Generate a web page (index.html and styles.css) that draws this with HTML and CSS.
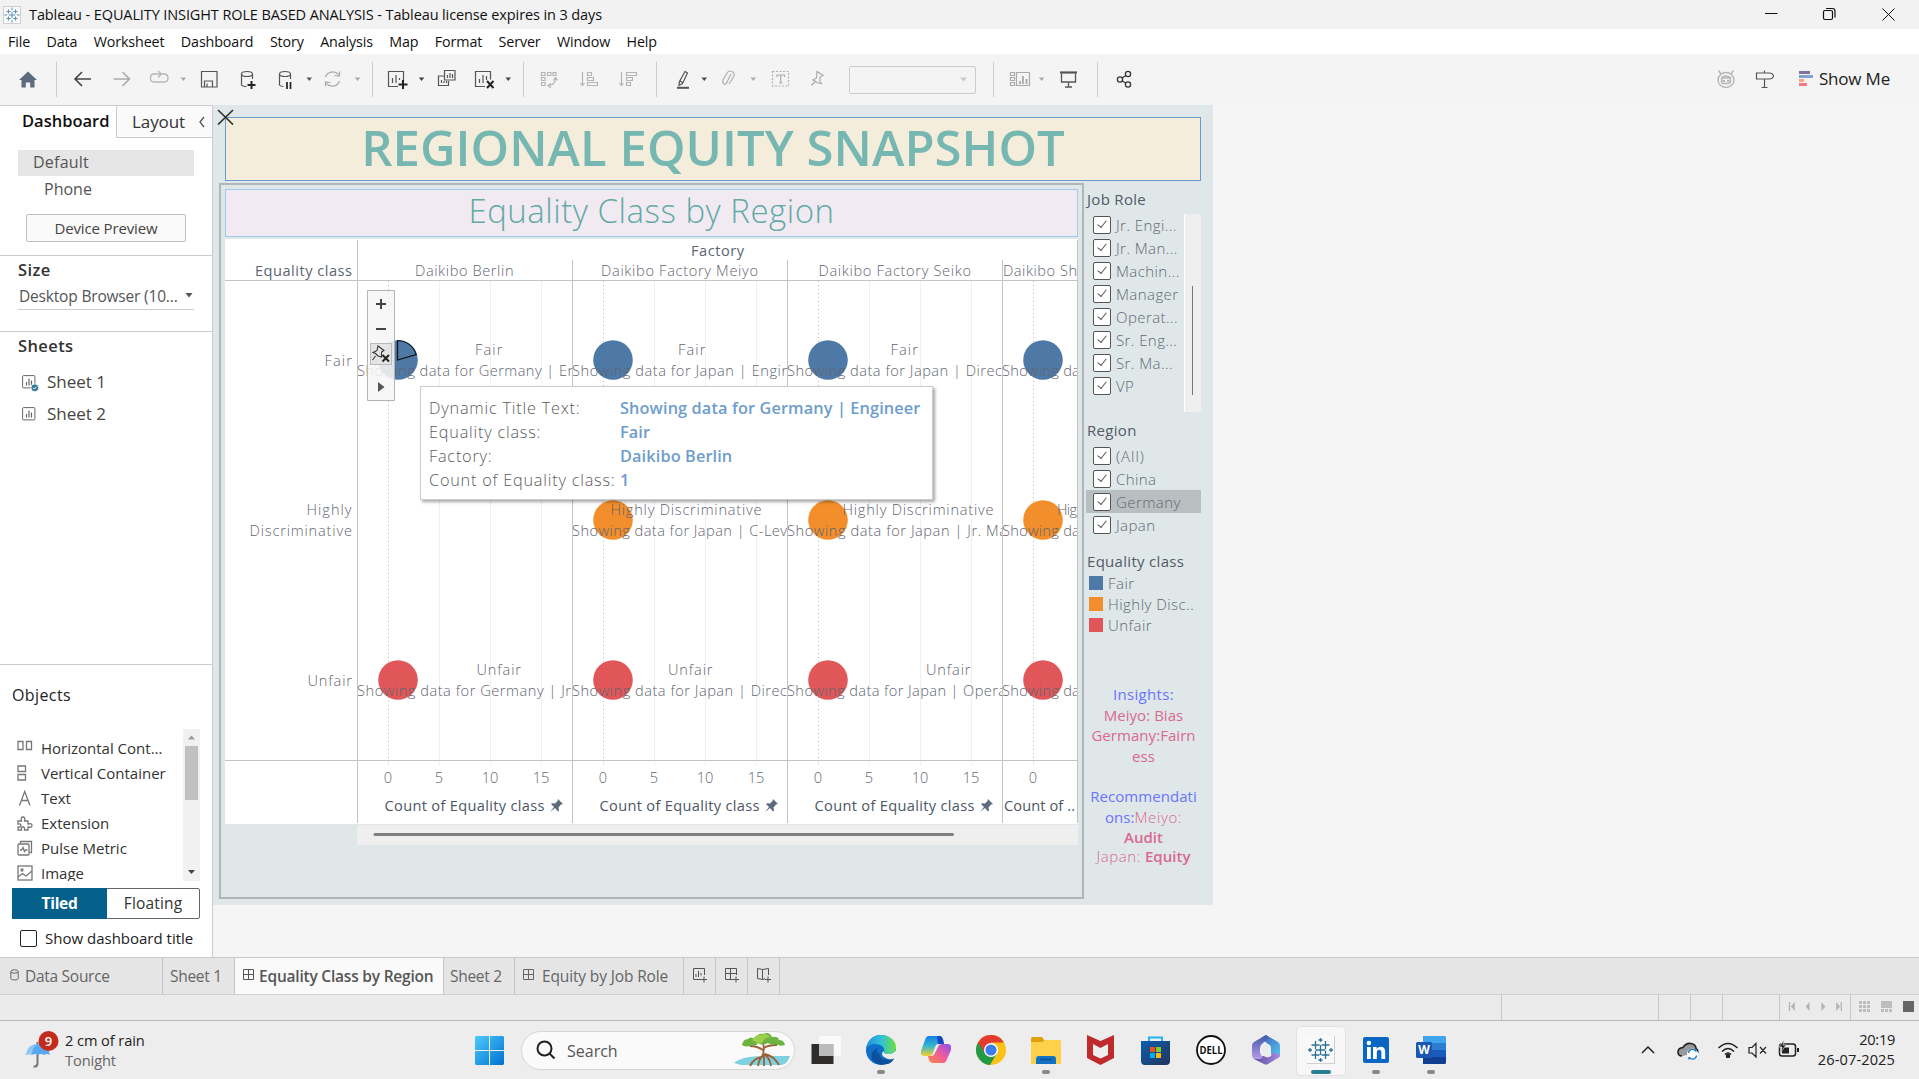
FILE: index.html
```html
<!DOCTYPE html>
<html lang="en">
<head>
<meta charset="utf-8">
<title>Tableau - EQUALITY INSIGHT ROLE BASED ANALYSIS</title>
<link rel="stylesheet" href="styles.css">
</head>
<body>
<header class="titlebar">
  <svg class="app-logo" width="18" height="18" viewBox="0 0 18 18"><rect x=".5" y=".5" width="17" height="17" fill="#f8f8f8" stroke="#d0d0d0"/><path d="M9 5.8v6.4M5.800 9h6.400M5.500 3.500v4M3.500 5.500h4M12.500 3.500v4M10.500 5.500h4M5.500 10.500v4M3.500 12.500h4M12.500 10.500v4M10.500 12.500h4M9 1.500v2.600M9 14v2.600M1.400 9H4M14 9h2.600" stroke="#5b93b8" stroke-width="1"/></svg>
  <span class="window-title">Tableau - EQUALITY INSIGHT ROLE BASED ANALYSIS - Tableau license expires in 3 days</span>
  <svg class="window-buttons" width="160" height="29" viewBox="1759 0 160 29" fill="none" stroke="#111"><path d="M1765 13.500h12.500M1882.500 8.500l12 12M1894.500 8.500l-12 12"/><rect x="1823.500" y="10.500" width="9" height="9" rx="1.500" stroke-width="1.200"/><path d="M1826 8.500h6.500a2.500 2.500 0 0 1 2.500 2.500v6.500" stroke-width="1.200"/></svg>
</header>
<nav class="menubar"><span>File</span><span>Data</span><span>Worksheet</span><span>Dashboard</span><span>Story</span><span>Analysis</span><span>Map</span><span>Format</span><span>Server</span><span>Window</span><span>Help</span></nav>
<div class="toolbar">
  <svg width="56" height="51" viewBox="0 54 56 51"><path d="M28 71.500l9 8.500h-2.500v7.500h-4.300v-5h-4.400v5h-4.300V80H19z" fill="#5c6b7d"/></svg>
  <i class="sep"></i>
  <svg width="315" height="51" viewBox="57 54 315 51" fill="none" stroke="#555" stroke-width="1.200">
    <path d="M91 79H75.500M82 72l-7 7 7 7" stroke="#444" stroke-width="1.600"/>
    <path d="M113.500 79H129M122.500 72l7 7-7 7" stroke="#aaa" stroke-width="1.600"/>
    <path d="M161 74h-7q-3.500 0-3.500 4t3.500 4h10q4 0 4-4t-4-4h-3M158 71l3.500 3-3.500 3.500" stroke="#b5b5b5" stroke-width="1.300"/>
    <path d="M180.500 77.500h5.500l-2.700 3.500z" fill="#aaa" stroke="none"/>
    <path d="M201.500 71.500h15.500v15.500h-15.500zM204.500 87v-6h8v6M207 87v-3.500"/>
    <path d="M241.500 74v11q1 1.500 5 1.500M252.500 74v5M241.500 74a5.500 2.500 0 0 0 11 0a5.500 2.500 0 0 0-11 0"/><path d="M251.500 81v8M247.500 85h8" stroke="#222" stroke-width="2"/>
    <path d="M279.500 74v11q1 1.500 4 1.500M290.500 74v5M279.500 74a5.500 2.500 0 0 0 11 0a5.500 2.500 0 0 0-11 0"/><path d="M287 82v7M290.500 82v7" stroke="#222" stroke-width="1.700"/>
    <path d="M306.500 77.500h5.500l-2.700 3.500z" fill="#555" stroke="none"/>
    <path d="M325.500 77a7.500 7 0 0 1 13-2.500M339.500 81a7.500 7 0 0 1-13 2.500M334.500 75.500l5 .5v-4.500M330.500 82.500l-5-.5v4.500" stroke="#aaa"/>
    <path d="M354.800 77.500h5.500l-2.700 3.500z" fill="#aaa" stroke="none"/>
  </svg>
  <i class="sep"></i>
  <svg width="150" height="51" viewBox="373 54 150 51" fill="none" stroke="#555" stroke-width="1.200">
    <path d="M398 86.500h-9.500v-15h15v9M392.500 83v-5M396 83v-8M399.500 80v-2"/><path d="M403 80v9M398.500 84.500h9" stroke="#222" stroke-width="2"/>
    <path d="M418.800 77.500h5.500l-2.700 3.500zM505.500 77.500h5.500l-2.700 3.500z" fill="#444" stroke="none"/>
    <path d="M444.500 70.500h10.500v9.500h-10.500zM444 76h-5.500v9.500h10V81M447.500 78v-3M450 78v-5M452.500 78v-4M441.500 83v-3M444 83v-2M446.500 83v-2"/>
    <path d="M485 86.500h-9.500v-15h15v8M479.500 83v-4M483 83v-8M486.500 80v-4"/><path d="M487 81l6.500 7M493.500 81l-6.500 7" stroke="#222" stroke-width="2"/>
  </svg>
  <i class="sep"></i>
  <svg width="132" height="51" viewBox="524 54 132 51" fill="none" stroke="#b5b5b5" stroke-width="1.200">
    <path d="M541.500 72.500h3.500v3h-3.500zM547.500 72.500h3.500v3h-3.500zM553 72.500h3v3h-3zM541.500 77.500h3.500v3h-3.500zM541.500 82.500h3.500v3h-3.500zM555.500 78q0 6.500-6.500 7.500M553.500 80.500l2-3 2 3M551 83.500l-3 2 3 2.500"/>
    <path d="M582.500 72v13M580.500 83l2 2.500 2-2.500M587.500 72.500h4v3h-4zM587.500 77.500h6v3h-6zM587.500 82.500h10v3h-10z"/>
    <path d="M621.500 72v13M619.500 83l2 2.500 2-2.500M626.500 72.500h10v3h-10zM626.500 77.500h6v3h-6zM626.500 82.500h4v3h-4z"/>
  </svg>
  <i class="sep"></i>
  <svg width="192" height="51" viewBox="657 54 192 51" fill="none" stroke="#555" stroke-width="1.200">
    <path d="M685 71.500l2.500 1.500-5 10.500-3.500 2 .5-4zM680 81l2.500 1.500"/><path d="M677 87.800h12" stroke-width="2"/>
    <path d="M701.500 77.500h5.500l-2.700 3.500z" fill="#444" stroke="none"/><path d="M750.500 77.500h5.500l-2.700 3.500z" fill="#aaa" stroke="none"/>
    <path d="M731 74l-4 8q-1 3-3 2t-1-4l4-7q2-3 5-1.500t2 4.500l-5 8" stroke="#b0b0b0"/>
    <rect x="772.500" y="71.500" width="16" height="14.500" stroke="#b0b0b0" stroke-dasharray="2 1.500"/><path d="M777 77v-2h7.500v2M780.700 75v8M779 83h3.500" stroke="#aaa"/>
    <path d="M817 71.500l6 4-3 1.500v4.500l1.500 2-3.500-.5-3-2-2-1 3.500-2zM815 81.500l-3.500 4" stroke="#aaa"/>
  </svg>
  <div class="font-select"><svg width="9" height="5" viewBox="0 0 9 5"><path d="M1 .5h7L4.500 4.500z" fill="#c8c8c8"/></svg></div>
  <i class="sep after-select"></i>
  <svg width="103" height="51" viewBox="994 54 103 51" fill="none" stroke="#aaa" stroke-width="1.200">
    <path d="M1010.500 72.500h4v3h-4zM1010.500 77.500h4v3h-4zM1010.500 82.500h4v3h-4zM1016.500 72.500h13v13h-13z"/><path d="M1020 84v-3M1023 84v-8M1026.500 84v-5" stroke-width="1.800"/>
    <path d="M1038.800 77.500h5.500l-2.700 3.500z" fill="#aaa" stroke="none"/>
    <path d="M1060 72.500h17" stroke="#555" stroke-width="2.200"/><path d="M1061.500 73.500v8.500h14v-8.500M1068.500 82v5M1065 87h7" stroke="#555" stroke-width="1.300"/>
  </svg>
  <i class="sep"></i>
  <svg width="50" height="51" viewBox="1098 54 50 51" fill="none" stroke="#333" stroke-width="1.300"><circle cx="1120" cy="79.500" r="2.600"/><circle cx="1128" cy="74" r="2.600"/><circle cx="1128" cy="84.500" r="2.600"/><path d="M1122 78l4-2.500M1122 80.800l4 2.400"/></svg>
  <div class="toolbar-right">
    <svg width="99" height="51" viewBox="1716 54 99 51" fill="none" stroke="#b5b5b5" stroke-width="1.400"><ellipse cx="1726" cy="80" rx="8" ry="7.500"/><path d="M1721 74l-2.500-3.500M1731 74l2.500-3.500M1721 78q5-4 10 0"/><rect x="1721.500" y="78" width="9" height="5.500" rx="2"/><path d="M1722.500 81h2.500M1727 81h2.500" stroke-width="2"/>
    <path d="M1756.500 73h12.500q4 0 4.500 3-.5 3-4.500 3h-12.500zM1764.500 70.500v2.500M1764.500 79v8.500M1761.500 87.500h6" stroke="#555" stroke-width="1.200"/>
    <path d="M1799 71h11v3h-11z" fill="#84719a" stroke="none"/><path d="M1799 75h14v3h-14z" fill="#7fa5cf" stroke="none"/><path d="M1799 79h5v3h-5z" fill="#f5a880" stroke="none"/><path d="M1799 83h8v3h-8z" fill="#f77788" stroke="none"/></svg>
    <span class="show-me">Show Me</span>
  </div>
</div>

<main class="workspace">
  <aside class="sidebar">
    <div class="side-tabs"><strong class="tab-dashboard">Dashboard</strong><div class="tab-layout"><span>Layout</span><svg width="8" height="12" viewBox="0 0 8 12" fill="none" stroke="#555" stroke-width="1.300"><path d="M6 1L2 6l4 5"/></svg></div></div>
    <div class="device default"><span>Default</span></div>
    <div class="device phone"><span>Phone</span></div>
    <div class="preview-btn"><span>Device Preview</span></div>
    <section class="size-panel"><h3>Size</h3><div class="size-select"><span>Desktop Browser (10...</span><svg width="8" height="5" viewBox="0 0 8 5"><path d="M.5 0h7L4 4.500z" fill="#555"/></svg></div></section>
    <section class="sheets-panel"><h3>Sheets</h3>
      <div class="sheet-row"><svg width="18" height="18" viewBox="0 0 18 18" fill="none" stroke="#666"><rect x=".6" y=".6" width="12.300" height="12.300" rx="1"/><path d="M4.500 10.500V7M7 10.500V3.500M9.500 10.500v-5" stroke-width="1.200"/><circle cx="12.800" cy="12.800" r="4" fill="#2f7a99" stroke="#fff"/><path d="M11 12.800l1.300 1.300 2.300-2.500" stroke="#fff"/></svg><span>Sheet 1</span></div>
      <div class="sheet-row"><svg width="18" height="18" viewBox="0 0 18 18" fill="none" stroke="#666"><rect x=".6" y=".6" width="12.300" height="12.300" rx="1"/><path d="M4.500 10.500V7M7 10.500V3.500M9.500 10.500v-5" stroke-width="1.200"/></svg><span>Sheet 2</span></div>
    </section>
    <section class="objects-panel"><h3>Objects</h3>
      <div class="objects-box">
        <div class="object-list">
          <div class="object"><svg width="16" height="16" viewBox="0 0 16 16" fill="none" stroke="#777" stroke-width="1.300"><path d="M1 1.500h5v8H1zM9.500 1.500h5v8h-5z"/></svg><span>Horizontal Cont...</span></div>
          <div class="object"><svg width="16" height="16" viewBox="0 0 16 16" fill="none" stroke="#777" stroke-width="1.300"><path d="M1 1h7.500v5.500H1zM1 9.500h7.500V15H1z"/></svg><span>Vertical Container</span></div>
          <div class="object"><svg width="16" height="16" viewBox="0 0 16 16" fill="none" stroke="#777" stroke-width="1.300"><path d="M2.500 15.500L7.700 1.500 13 15.500M4.300 10.500h7"/></svg><span>Text</span></div>
          <div class="object"><svg width="16" height="16" viewBox="0 0 16 16" fill="none" stroke="#777" stroke-width="1.300"><path d="M1 6h3.500q-1-4 1.500-4t1.500 4H11v3q4-1 4 1.500T11 12v3H7.500q.5-3-1.500-3t-1.500 3H1v-3q3 .5 3-1.500T1 9z"/></svg><span>Extension</span></div>
          <div class="object"><svg width="16" height="16" viewBox="0 0 16 16" fill="none" stroke="#777" stroke-width="1.300"><rect x="1" y="4" width="11" height="11" rx="1"/><path d="M3.500 3.500V1.500h11v11h-2M3 10h1.500l1.500-2.500 1.500 4 1-1.500H10.500"/></svg><span>Pulse Metric</span></div>
          <div class="object"><svg width="16" height="16" viewBox="0 0 16 16" fill="none" stroke="#777" stroke-width="1.300"><rect x="1" y="1" width="14" height="14"/><path d="M1 12l4.500-3.500L9 11l6-5"/><circle cx="5" cy="5" r="1"/></svg><span>Image</span></div>
        </div>
        <div class="object-scroll"><svg width="17" height="152" viewBox="0 0 17 152"><path d="M8.500 6.500l3.500 4H5z" fill="#999"/><rect x="2" y="17" width="13" height="54" fill="#c1c1c1"/><path d="M8.500 145l-3.500-4h7z" fill="#444"/></svg></div>
      </div>
      <div class="layout-toggle"><b>Tiled</b><span>Floating</span></div>
      <label class="show-title"><i></i><span>Show dashboard title</span></label>
    </section>
  </aside>

  <div class="dashboard">
    <svg class="remove-x" width="17" height="16" viewBox="0 0 17 16" stroke="#333" stroke-width="1.700"><path d="M1 1l15 14.500M16 1L1 15.500"/></svg>
    <h1 class="banner"><span>REGIONAL EQUITY SNAPSHOT</span></h1>
    <div class="dash-body">
      <div class="viz-frame">
        <h2 class="viz-title"><span>Equality Class by Region</span></h2>
        <svg class="viz" width="853" height="607" viewBox="225 239 853 607">
          <defs>
            <clipPath id="c1"><path d="M357 281h215v479h-215z"/></clipPath><clipPath id="c2"><path d="M572 281h215v479h-215z"/></clipPath><clipPath id="c3"><path d="M787 281h215v479h-215z"/></clipPath><clipPath id="c4"><path d="M1002 240h75v583h-75z"/></clipPath>
            <g id="pane"><path d="M82.500 281v484M133.500 281v484M184.500 281v484" stroke="#f0f0f0"/><path d="M31.500 761v4" stroke="#e6e6e6"/><path d="M31.500 281v479" stroke="#bbb" stroke-dasharray="1 3"/></g>
            <g id="pin"><path d="M8 0l5 5-2 .5-2.500 3 .5 3-1 1-3-3.500L0 13l4-5L1 5l1-.8 3 .3L7.500 2z" fill="#5c6b7d"/></g>
          </defs>
          <path d="M225 239h853v585H225z" fill="#fff"/>
          <use href="#pane" x="357"/><use href="#pane" x="572"/><use href="#pane" x="787"/><g clip-path="url(#c4)"><use href="#pane" x="1002"/></g>
          <path d="M225 280.500h852M225 760.500h852M357.500 240v583M572.500 260v563M787.500 260v563M1002.500 260v563M1077.500 240v583" stroke="#c4c4c4" fill="none"/>
          <g fill="#4e79a7"><circle cx="398" cy="360" r="19.800"/><circle cx="613" cy="360" r="19.800"/><circle cx="828" cy="360" r="19.800"/><circle cx="1043" cy="360" r="19.800"/></g>
          <g fill="#f28e2b"><circle cx="613" cy="520" r="19.800"/><circle cx="828" cy="520" r="19.800"/><circle cx="1043" cy="520" r="19.800"/></g>
          <g fill="#e15759"><circle cx="398" cy="680" r="19.800"/><circle cx="613" cy="680" r="19.800"/><circle cx="828" cy="680" r="19.800"/><circle cx="1043" cy="680" r="19.800"/></g>
          <path d="M397.500 360v-19.500a19.500 19.500 0 0 1 18.700 14z" fill="none" stroke="#111" stroke-width="1.200"/>
          <g class="hd"><text x="255" y="275.500" textLength="97">Equality class</text><text x="691" y="256" textLength="53">Factory</text></g>
          <g class="lb">
            <text x="415" y="275.500" textLength="98.500">Daikibo Berlin</text><text x="601" y="275.500" textLength="157">Daikibo Factory Meiyo</text><text x="818.500" y="275.500" textLength="152.500">Daikibo Factory Seiko</text><text x="1003" y="275.500" textLength="74">Daikibo Sh</text>
            <text x="324.500" y="366" textLength="27.500">Fair</text><text x="306.500" y="515" textLength="45">Highly</text><text x="249.500" y="536" textLength="102.500">Discriminative</text><text x="307.500" y="686" textLength="44.500">Unfair</text>
            <g clip-path="url(#c1)"><text x="475" y="355" textLength="27.500">Fair</text><text x="357" y="376" textLength="219">Showing data for Germany | En</text><text x="476.500" y="675" textLength="44.500">Unfair</text><text x="357" y="696" textLength="214">Showing data for Germany | Jr</text></g>
            <g clip-path="url(#c2)"><text x="678" y="355" textLength="27.500">Fair</text><text x="572" y="376" textLength="218">Showing data for Japan | Engin</text><text x="610.500" y="515" textLength="151">Highly Discriminative</text><text x="572" y="536" textLength="215">Showing data for Japan | C-Lev</text><text x="668" y="675" textLength="44.500">Unfair</text><text x="572" y="696" textLength="215">Showing data for Japan | Direc</text></g>
            <g clip-path="url(#c3)"><text x="890.500" y="355" textLength="27.500">Fair</text><text x="787" y="376" textLength="215">Showing data for Japan | Direc</text><text x="842.500" y="515" textLength="151">Highly Discriminative</text><text x="787" y="536" textLength="220">Showing data for Japan | Jr. Ma</text><text x="926" y="675" textLength="44.500">Unfair</text><text x="787" y="696" textLength="219">Showing data for Japan | Opera</text></g>
            <g clip-path="url(#c4)"><text x="1002" y="376" textLength="83">Showing dat</text><text x="1057" y="515" textLength="28">High</text><text x="1002" y="536" textLength="83">Showing dat</text><text x="1002" y="696" textLength="83">Showing dat</text></g>
            <g text-anchor="middle"><text x="388" y="783">0</text><text x="439" y="783">5</text><text x="490" y="783">10</text><text x="541" y="783">15</text><text x="603" y="783">0</text><text x="654" y="783">5</text><text x="705" y="783">10</text><text x="756" y="783">15</text><text x="818" y="783">0</text><text x="869" y="783">5</text><text x="920" y="783">10</text><text x="971" y="783">15</text><text x="1033" y="783">0</text></g>
          </g>
          <g class="hd ax"><text x="384.500" y="811" textLength="160">Count of Equality class</text><text x="599.500" y="811" textLength="160">Count of Equality class</text><text x="814.500" y="811" textLength="160">Count of Equality class</text><text x="1004" y="811" textLength="71">Count of ..</text></g>
          <use href="#pin" x="550" y="799"/><use href="#pin" x="765" y="799"/><use href="#pin" x="980" y="799"/>
          <path d="M225 824h853v1H225z" fill="#dfe7e9"/><path d="M357 825h721v20H357z" fill="#efefef"/><path d="M375 834.500h577.500" stroke="#808080" stroke-width="3" stroke-linecap="round"/>
        </svg>
        <svg class="view-tools" width="28" height="111" viewBox="367 290 28 111"><path d="M367.500 290.500h27v110h-27z" fill="#f6f6f6" fill-opacity=".88" stroke="#b4b4b4"/><path d="M381 299v10M376 304h10M376 329h10" stroke="#444" stroke-width="2"/><rect x="370.500" y="343.500" width="21" height="21" fill="#e4e4e4" stroke="#bbb"/><path d="M378 346l6 4.500-2.500 1.500v5l-3.500-1-2.500-2.500-2.500-1 4-2zM375.500 356l-3 4" fill="none" stroke="#333" stroke-width="1.100"/><path d="M382.500 355l6.500 6.500M389 355l-6.500 6.500" stroke="#222" stroke-width="2"/><path d="M378 382l6.500 5-6.500 5z" fill="#555"/></svg>
        <dl class="tooltip"><dt>Dynamic Title Text:</dt><dd>Showing data for Germany | Engineer</dd><dt>Equality class:</dt><dd>Fair</dd><dt>Factory:</dt><dd>Daikibo Berlin</dd><dt>Count of Equality class:</dt><dd>1</dd></dl>
      </div>
      <div class="side-cards">
        <section class="filter job-role"><h4>Job Role</h4>
          <div class="role-box"><ul class="checks">
            <li><i></i><span>Jr. Engi...</span></li><li><i></i><span>Jr. Man...</span></li><li><i></i><span>Machin...</span></li><li><i></i><span>Manager</span></li><li><i></i><span>Operat...</span></li><li><i></i><span>Sr. Eng...</span></li><li><i></i><span>Sr. Ma...</span></li><li><i></i><span>VP</span></li>
          </ul><div class="role-scroll"></div></div>
        </section>
        <section class="filter region"><h4>Region</h4><ul class="checks"><li><i></i><span class="all">(All)</span></li><li><i></i><span>China</span></li><li class="selected"><i></i><span>Germany</span></li><li><i></i><span>Japan</span></li></ul></section>
        <section class="legend"><h4>Equality class</h4><div><i class="fair"></i><span>Fair</span></div><div><i class="high"></i><span>Highly Disc..</span></div><div><i class="unfair"></i><span>Unfair</span></div></section>
        <div class="notes"><p class="blue lead">Insights:</p><p>Meiyo: Bias</p><p>Germany:Fairn</p><p>ess</p><p class="blue rec">Recommendati</p><p><span class="blue">ons:</span><span class="thin">Meiyo:</span></p><p class="strong tight">Audit</p><p class="tight"><span class="thin">Japan:</span> <b>Equity</b></p></div>
      </div>
    </div>
  </div>
</main>

<nav class="sheet-tabs">
  <div class="stab source"><svg width="9" height="12" viewBox="0 0 9 12" fill="none" stroke="#666"><path d="M.8 2.500v7q0 1.500 3.700 1.500t3.700-1.500v-7M.8 2.500a3.700 1.700 0 0 0 7.400 0a3.700 1.700 0 0 0-7.400 0"/></svg><span>Data Source</span></div>
  <div class="stab s1"><span>Sheet 1</span></div>
  <div class="stab active"><svg width="12" height="12" viewBox="0 0 12 12" fill="none" stroke="#555"><path d="M.5.5h10v10H.5zM5.500.5v10M.5 5.500h10"/></svg><span>Equality Class by Region</span></div>
  <div class="stab s2"><span>Sheet 2</span></div>
  <div class="stab job"><svg width="12" height="12" viewBox="0 0 12 12" fill="none" stroke="#666"><path d="M.5.5h10v10H.5zM5.500.5v10M.5 5.500h10"/></svg><span>Equity by Job Role</span></div>
  <div class="stab add"><svg width="16" height="16" viewBox="0 0 16 16" fill="none" stroke="#555"><path d="M9 12.500H1.500v-11h11V8M4 10V7M6.500 10V4M9 8.500V6M12 9.500v6M9 12.500h6"/></svg></div>
  <div class="stab add"><svg width="16" height="16" viewBox="0 0 16 16" fill="none" stroke="#555"><path d="M9 12.500H1.500v-11h11V8M6.500 1.500v11M1.500 6.500h11M12 9.500v6M9 12.500h6"/></svg></div>
  <div class="stab add"><svg width="16" height="16" viewBox="0 0 16 16" fill="none" stroke="#555"><path d="M9 11.500l-2 1-5.500-1v-10l5 1 6-1V8M6.500 2.500v10M12 9.500v6M9 12.500h6"/></svg></div>
</nav>
<div class="statusbar">
  <i class="w157"></i><i class="w32"></i><i class="w32"></i><i class="w57"></i>
  <svg class="nav-arrows" width="71" height="25" viewBox="1779 995 71 25" fill="#b4b4b4"><path d="M1788 1002h1.300v9h-1.300zM1794 1002v9l-4-4.500zM1809 1002v9l-4-4.500zM1821 1002v9l4-4.500zM1836 1002v9l4-4.500zM1840.500 1002h1.300v9h-1.300z"/></svg>
  <svg class="views" width="69" height="25" viewBox="1851 995 68 25" fill="#bdbdbd"><path d="M1859 1001h3v3h-3zM1863 1001h3v3h-3zM1867 1001h3v3h-3zM1859 1005h3v3h-3zM1863 1005h3v3h-3zM1867 1005h3v3h-3zM1859 1009h3v3h-3zM1863 1009h3v3h-3zM1867 1009h3v3h-3zM1881 1001h11v7h-11zM1881 1009h3v3h-3zM1885 1009h3v3h-3zM1889 1009h3v3h-3z"/><path d="M1903 1001h11v11h-11z" fill="#666"/></svg>
</div>
<footer class="taskbar">
  <div class="weather"><svg width="36" height="40" viewBox="25 1026 36 40"><path d="M37.500 1038v22q-.5 3-4 2.500" fill="none" stroke="#777" stroke-width="2"/><path d="M26 1051q2-11 12-11t12 11q-3-2-6 0-3-2-6 0-3-2-6 0-3-2-6 0z" fill="#58a9ee"/><path d="M32 1051q0-9 6-11-9 0-12 11 3-2 6 0z" fill="#8cc8f8"/><circle cx="48.500" cy="1037" r="10" fill="#c42b1c"/><text class="badge" x="48.500" y="1042" text-anchor="middle">9</text></svg><div><span>2 cm of rain</span><small>Tonight</small></div></div>
  <svg class="start" width="29" height="29" viewBox="0 0 29 29"><defs><linearGradient id="win" x1="0" y1="0" x2="1" y2="1"><stop stop-color="#4ccbfb"/><stop offset="1" stop-color="#0070d0"/></linearGradient></defs><path d="M1 0h13v14H0V1zM15 0h13l1 1v13H15zM0 15h14v14H1l-1-1zM15 15h14v13l-1 1H15z" fill="url(#win)"/></svg>
  <div class="search"><svg width="20" height="20" viewBox="0 0 20 20" fill="none" stroke="#222" stroke-width="2"><circle cx="8.500" cy="8.500" r="7"/><path d="M13.500 13.500l5 5"/></svg><span>Search</span>
    <svg class="tree" width="58" height="34" viewBox="0 0 58 34"><path d="M1 30q8-7 30-7h26q-2 7-8 9H8z" fill="#7fd0e0"/><path d="M30 10q2 8-1 14-8 1-12 9M30 22q-4 4-5 11M31 22q0 5 0 11M31 21q6 4 7 12M32 21q9 2 14 11M30 17q-6-4-13-4M31 15q4-3 13-3" fill="none" stroke="#9a6237" stroke-width="1.800"/><path d="M9 12q1-6 6-6 3-3 6 0 4-6 9-5 6-3 9 3 6-1 7 3 5 0 6 5-5 2-9-1-4 2-8-1-6 3-10 0-2 4-6 2-5 3-10 0z" fill="#6db33f"/><path d="M19 7q4-6 10-5 5-3 8 2-6 1-8 6-4 1-6-1z" fill="#9bd04c"/></svg></div>
  <div class="apps">
    <div class="app"><svg width="30" height="30" viewBox="0 0 30 30"><path d="M.5 9h22v20h-22z" fill="#2e2d2c"/><path d="M8 1h22v20H8z" fill="#fff" fill-opacity=".7"/><path d="M8 9h14.500v12H8z" fill="#bbb"/></svg></div>
    <div class="app run"><svg width="30" height="30" viewBox="0 0 30 30"><defs><linearGradient id="ed"><stop stop-color="#2390dd"/><stop offset=".5" stop-color="#2fc0da"/><stop offset="1" stop-color="#6fe03f"/></linearGradient></defs><circle cx="15" cy="15" r="15" fill="#0f6fc9"/><path d="M0 14C2 4 8 0 15 0c9 0 15 6 15 12 0 5-4 7-8 7-3 0-5-1-4-3 1-2-1-5-4-6C8 8 3 9 0 14z" fill="url(#ed)"/><path d="M12 13c-4 6 1 14 9 14 3 0 5-1 7-3-6 8-17 6-20 3-5-5-2-12 4-14z" fill="#0c4f9c"/><path d="M18 16c-1 2 1 3 4 3 3 0 6-1 8-4v8c-3 2-8 2-12-1-3-2-2-5 0-6z" fill="#ededed"/><path d="M13 16c-1 5 3 9 9 9 3 0 5-1 6-2-1 4-6 7-10 6-6-1-9-9-5-13z" fill="#0c4f9c"/></svg></div>
    <div class="app"><svg width="30" height="28" viewBox="0 0 30 28"><defs><linearGradient id="cp1" x1="0" y1="0" x2="0" y2="1"><stop stop-color="#1580e8"/><stop offset=".5" stop-color="#35b6d0"/><stop offset="1" stop-color="#f5d12a"/></linearGradient><linearGradient id="cp2" x1="1" y1="0" x2="0" y2="1"><stop stop-color="#8a4ff0"/><stop offset=".5" stop-color="#ef5a9c"/><stop offset="1" stop-color="#fb8a3c"/></linearGradient></defs><path d="M8 0h10q3 0 4 5l1 3h-6q-2 0-3 3l-2 6q-1 3-4 3H3q-4 0-3-5L4 4q1-4 4-4z" fill="url(#cp1)"/><path d="M16 0h3q3 0 4 8h-6z" fill="#1747c2"/><path d="M22 27H12q-4 0-5-7h3q3 0 4-3l3-6q1-3 4-3h6q4 0 3 6l-4 9q-1 4-4 4z" fill="url(#cp2)"/></svg></div>
    <div class="app"><svg width="30" height="30" viewBox="0 0 30 30"><circle cx="15" cy="15" r="15" fill="#fbc116"/><path d="M15 15L2 7.500A15 15 0 0 0 14 30l7-12z" fill="#229a48"/><path d="M2 7.500A15 15 0 0 1 28 7.500H15L9 18z" fill="#e33b2e"/><circle cx="15" cy="15" r="7" fill="#fff"/><circle cx="15" cy="15" r="5.600" fill="#3b7ded"/></svg></div>
    <div class="app run"><svg width="30" height="27" viewBox="0 0 30 27"><path d="M0 1.500Q0 0 1.500 0H11l3 4h14q2 0 2 2v20H0z" fill="#dfa00a"/><path d="M0 5h11l3-2h15l1 1v23H0z" fill="#ffd04a"/><path d="M5 27v-5q0-3 3-3h14q3 0 3 3v5z" fill="#1272c4"/><path d="M9 22.500h12" stroke="#0b4f94" stroke-width="1.500"/></svg></div>
    <div class="app"><svg width="27" height="30" viewBox="0 0 27 30"><path d="M0 0l13.500 6L27 0v23l-13.500 7L0 23zM6 9v11l7.500 3.500L21 20V9l-7.500 4z" fill="#bf2b2d" fill-rule="evenodd"/></svg></div>
    <div class="app"><svg width="29" height="29" viewBox="0 0 29 29"><defs><linearGradient id="st" x2="1" y2="1"><stop stop-color="#0b5fae"/><stop offset="1" stop-color="#23345c"/></linearGradient></defs><path d="M8 6V1.500h13V6" fill="none" stroke="#25b3ef" stroke-width="2"/><path d="M0 5h29v20q0 4-4 4H4q-4 0-4-4z" fill="url(#st)"/><path d="M9 11h5v5H9z" fill="#f1511b"/><path d="M15 11h5v5h-5z" fill="#80cc28"/><path d="M9 17h5v5H9z" fill="#00adef"/><path d="M15 17h5v5h-5z" fill="#fbbc09"/></svg></div>
    <div class="app"><svg width="30" height="30" viewBox="0 0 30 30"><circle cx="15" cy="15" r="14" fill="#fff" stroke="#111" stroke-width="1.800"/><text class="dell" x="15" y="18.700" text-anchor="middle" textLength="23" lengthAdjust="spacingAndGlyphs">DELL</text></svg></div>
    <div class="app"><svg width="28" height="30" viewBox="0 0 28 30"><defs><linearGradient id="m1" x1="0" y1="0" x2="1" y2="1"><stop stop-color="#3f5fc0"/><stop offset="1" stop-color="#55c8f0"/></linearGradient><linearGradient id="m2" x1="0" y1="0" x2="1" y2="0"><stop stop-color="#5a4ea0"/><stop offset="1" stop-color="#a98be0"/></linearGradient><linearGradient id="m3" x1="0" y1="0" x2="0" y2="1"><stop stop-color="#3d5aa8"/><stop offset="1" stop-color="#b79bea"/></linearGradient></defs><path d="M14 0l12 7q2 1 2 4v9q0 2-2 3l-7-4v-6q0-3-3-4L9 3z" fill="url(#m1)"/><path d="M2 24l10 5q2 1 4 0l10-6q2-1 2-4l-8-1q0 3-3 4-3 1-5-1H7z" fill="url(#m2)"/><path d="M14 0L2 7q-2 1-2 4v9q0 3 2 4h5q3 0 4-2-3-2-3-5v-4q0-3 3-5l6-5z" fill="url(#m3)"/><circle cx="14" cy="14.500" r="5" fill="#ededed"/></svg></div>
    <div class="app current"><svg width="28" height="28" viewBox="0 0 28 28"><path d="M0 0h28v28H0z" fill="#f9f9f9"/><path d="M27.500 0v27.500H0" fill="none" stroke="#cfcfcf"/><path d="M13.500 9v10M8.500 14h10M8.500 5v8M4.500 9h8M18.500 5v8M14.500 9h8M8.500 15v8M4.500 19h8M18.500 15v8M14.500 19h8M13.500 2v4M11.500 4h4M13.500 22v4M11.500 24h4M3 12v4M1 14h4M24 12v4M22 14h4" stroke="#2b7497" stroke-width="1.300"/></svg></div>
    <div class="app run"><svg width="26" height="26" viewBox="0 0 26 26"><rect width="26" height="26" rx="2" fill="#0a66c2"/><path d="M4 10h3.800v12H4zM10 10h3.700v2q1.300-2.300 4-2.300 4.500 0 4.500 5.300v7h-3.800v-6.300q0-2.900-2.200-2.900-2.400 0-2.400 3V22H10z" fill="#fff"/><circle cx="5.900" cy="6" r="2.200" fill="#fff"/></svg></div>
    <div class="app run"><svg width="30" height="28" viewBox="0 0 30 28"><path d="M7 0h22l1 1v6H7z" fill="#41a5ee"/><path d="M7 7h23v7H7z" fill="#2b7cd3"/><path d="M7 14h23v7H7z" fill="#185abd"/><path d="M7 21h23v6l-1 1H7z" fill="#103f91"/><rect y="6" width="16" height="16" rx="1.500" fill="#1a56b4"/><text class="wd" x="8" y="18" text-anchor="middle">W</text></svg></div>
  </div>
  <svg class="tray" width="165" height="58" viewBox="1637 1021 165 58" fill="none" stroke="#222" stroke-width="1.500"><path d="M1642 1053l6-6 6 6"/><path d="M1682 1056q-4 0-4-4t5-4.500q3-5 8-4t5 5q2 1 2 4" fill="#999" stroke="#222" stroke-width="1.600"/><circle cx="1692.500" cy="1054" r="5.500" fill="#fff" stroke="none"/><path d="M1688.500 1053a4 4 0 0 1 7.500-1.500v-2.500M1696.500 1055.500a4 4 0 0 1-7.500 1.500v2.500" stroke="#1a78c8" stroke-width="1.300"/><path d="M1718.500 1048q9.500-9 19 0M1722 1051.500q6-6 12 0M1725 1054.500q3-3 6 0"/><circle cx="1728" cy="1056" r="1.500" fill="#222"/><path d="M1749 1047.500h3l4-4v13.500l-4-4h-3zM1760 1047l6 6.500M1766 1047l-6 6.500" stroke-width="1.200"/><rect x="1779.500" y="1044" width="16" height="12" rx="2.500"/><path d="M1798 1048v4" stroke-width="2"/><path d="M1782 1047.500h7v6h-7z" fill="#222" stroke="none"/><path d="M1784 1040l-5 7h3l-1 5 5-7h-3z" fill="#222" stroke="#ededed" stroke-width=".6"/></svg>
  <div class="clock"><span class="time">20:19</span><span>26-07-2025</span></div>
</footer>
</body>
</html>
```
FILE: styles.css
```css
* { box-sizing: border-box; }
body { margin: 0; width: 1919px; height: 1079px; overflow: hidden; background: #f5f5f5; color: #333; font: 15px/20px "Open Sans", "Noto Sans", sans-serif; position: relative; }
h1, h2, h3, h4, p, ul, dl, dd { margin: 0; padding: 0; font-weight: normal; }
svg { display: block; flex: none; }
span, b, strong, small, dt, dd, h3, h4 { white-space: nowrap; }

/* Window chrome */
.titlebar { height: 29px; background: #f2f2f2; display: flex; align-items: center; padding-left: 3px; color: #111; font-size: 14.5px; letter-spacing: -.11px; }
.app-logo { margin-right: 8px; }
.window-buttons { margin-left: auto; }
.menubar { height: 25px; background: #fff; display: flex; align-items: center; gap: 16.400px; padding: 1px 0 0 8px; color: #111; font-size: 14.300px; letter-spacing: -.13px; }
.toolbar { height: 51px; background: #f4f4f4; display: flex; align-items: center; }
.sep { width: 1px; height: 35px; background: #ccc; flex: none; }
.font-select { width: 127px; height: 28px; border: 1px solid #ccc; border-radius: 2px; display: flex; align-items: center; justify-content: flex-end; padding-right: 7px; }
.after-select { margin-left: 17px; }
.toolbar-right { margin-left: auto; display: flex; align-items: center; width: 203px; }
.show-me { margin: -1px 0 0 4px; font-size: 17px; letter-spacing: -.2px; color: #222; }

/* Left panel */
.workspace { display: flex; height: 852px; }
.sidebar { width: 213px; border-top: 1px solid #ccc; border-right: 1px solid #ccc; background: #fff; flex: none; display: flex; flex-direction: column; }
.side-tabs { display: flex; height: 32px; }
.tab-dashboard { width: 116px; padding: 5px 0 0 22px; font-size: 16.500px; font-weight: 600; color: #111; }
.tab-layout { flex: 1; display: flex; align-items: center; border-left: 1px solid #ccc; border-bottom: 1px solid #ccc; background: #fafafa; padding: 0 6px 0 15px; font-size: 17px; letter-spacing: -.09px; justify-content: space-between; }
.device { margin-left: 18px; width: 176px; height: 26px; line-height: 25px; font-size: 16px; color: #555; }
.default { margin-top: 12px; background: #e6e6e6; padding-left: 15px; letter-spacing: .23px; }
.phone { padding-left: 26px; line-height: 26px; }
.preview-btn { margin: 12px 0 0 26px; width: 160px; height: 28px; border: 1px solid #bfbfbf; border-radius: 2px; background: #fafafa; text-align: center; line-height: 26px; font-size: 15px; letter-spacing: -.14px; color: #444; }
.sidebar h3 { font-weight: 600; font-size: 16.500px; line-height: 24px; letter-spacing: .4px; color: #333; }
.size-panel { margin-top: 13px; border-top: 1px solid #ccc; height: 76px; padding: 2px 18px 0; }
.size-select { height: 28px; border-bottom: 1px solid #ccc; display: flex; align-items: center; justify-content: space-between; padding: 0 1px; font-size: 15.500px; letter-spacing: -.18px; color: #555; }
.sheets-panel { border-top: 1px solid #ccc; padding: 2px 18px 0; height: 333px; }
.sheet-row { display: flex; align-items: center; height: 32px; gap: 7px; padding-left: 4px; font-size: 17px; color: #444; }
.sheets-panel h3 { margin-bottom: 8px; }
.sheet-row svg { margin-top: 3px; }
.objects-panel { border-top: 1px solid #ccc; padding: 18px 12px 0; }
.sidebar .objects-panel h3 { font-weight: 500; height: 46px; font-size: 16px; line-height: 25px; color: #222; }
.objects-box { display: flex; height: 152px; overflow: hidden; }
.object-list { flex: 1; padding-top: 6px; }
.object { display: flex; align-items: center; gap: 8px; height: 25px; padding-left: 5px; font-size: 15px; color: #333; }
.object-scroll { background: #f1f1f1; }
.layout-toggle { margin-top: 7px; height: 31px; display: grid; grid-template-columns: 94px 92px; line-height: 28px; text-align: center; border: 1px solid #666; border-radius: 2px; font-size: 15.500px; color: #333; width: 188px; }
.layout-toggle b { background: #05618c; color: #fff; margin: -1px 0 -1px -1px; line-height: 30px; font-weight: 700; letter-spacing: -.28px; }
.layout-toggle span { letter-spacing: .16px; }
.show-title { display: flex; align-items: center; gap: 8px; margin: 9px 0 0 8px; color: #222; font-size: 15px; }
.show-title i { width: 17px; height: 17px; border: 1px solid #222; border-radius: 2px; margin-top: 1px; }

/* Dashboard canvas */
.dashboard { position: relative; width: 1000px; height: 800px; background: #dfe7e9; padding: 12px 12px 0 6px; }
.remove-x { position: absolute; left: 4px; top: 4px; }
.banner { margin-left: 6px; width: 976px; height: 64px; border: 1px solid #6c9bcb; background: #f4eddc; color: #76b7b2; text-align: center; font-size: 49px; line-height: 59px; font-weight: 600; letter-spacing: .05px; }
.dash-body { display: flex; margin-top: 2px; }
.viz-frame { position: relative; width: 865px; height: 716px; border: 2px solid #aeb6b8; padding: 4px; }
.viz-title { width: 853px; height: 48px; border: 1px solid #a0cbe8; background: #f2eaf3; color: #62aaa4; text-align: center; font-size: 33px; line-height: 41px; font-weight: 300; letter-spacing: .51px; margin-bottom: 2px; }
.viz text { font-family: "Open Sans", sans-serif; font-size: 14.600px; }
.viz .lb { fill: #5f656f; font-weight: 300; }
.viz .hd { fill: #5c6470; font-weight: 500; }
.viz .ax { fill: #4c5664; }
.view-tools { position: absolute; left: 146px; top: 105px; }
.tooltip { position: absolute; left: 199px; top: 201px; width: 513px; height: 114px; background: #fff; border: 1px solid #ccc; box-shadow: 2px 2px 3px rgba(0,0,0,.35); display: grid; grid-template-columns: 191px 1fr; grid-auto-rows: 24px; padding: 9px 0 0 8px; font-size: 16.300px; line-height: 24px; color: #5c5c5c; }
.tooltip dt { font-weight: 300; letter-spacing: .78px; }
.tooltip dd { color: #6e9dcc; font-weight: 600; letter-spacing: .12px; }

/* Filters, legend and notes */
.side-cards { padding-left: 2px; width: 117px; color: #626973; }
.side-cards h4 { font-size: 15px; line-height: 20px; font-weight: 500; letter-spacing: .3px; padding-left: 1px; color: #535b67; }
.job-role { padding-top: 6px; }
.role-box { display: flex; justify-content: space-between; height: 198px; margin-top: 5px; }
.checks { list-style: none; margin-top: -1px; }
.checks li { display: flex; align-items: center; height: 23px; padding-left: 7px; gap: 5px; font-size: 15px; font-weight: 300; letter-spacing: .42px; }
.checks .all { letter-spacing: 1px; }
.checks i { width: 18px; height: 18px; border: 1px solid #555; border-radius: 2px; background: #fff; display: flex; align-items: center; justify-content: center; }
.checks i::before { content: ""; width: 4px; height: 8px; border: solid #555; border-width: 0 1.600px 1.600px 0; transform: translate(-.5px,-1.500px) rotate(38deg); }
.role-scroll { width: 17px; background: #efefef; border-left: 1px solid #fff; padding: 72px 0 0 7px; }
.role-scroll::before { content: ""; display: block; width: 1px; height: 109px; background: #777; }
.region { padding-top: 8px; }
.region .checks { margin-top: 4px; }
.region .selected { background: #b9bfc1; }
.legend { padding-top: 15px; }
.legend h4 { margin-bottom: 1px; }
.legend div { display: flex; align-items: center; height: 21px; gap: 5px; padding-left: 3px; font-size: 15px; font-weight: 300; letter-spacing: .46px; }
.legend i { width: 14px; height: 14px; }
.fair { background: #4e79a7; }
.high { background: #f28e2b; }
.unfair { background: #e15759; }
.notes { margin-top: 49px; text-align: center; color: #d9698f; font-size: 15px; font-weight: 500; line-height: 20.600px; letter-spacing: .05px; }
.notes .blue { color: #6b74ff; }
.notes .lead { letter-spacing: .32px; }
.notes .rec { margin-top: 20px; }
.notes .thin { font-weight: 300; letter-spacing: .6px; }
.notes .strong, .notes b { font-weight: 600; }
.notes .tight { line-height: 19px; }

/* Sheet tabs and status bar */
.sheet-tabs { height: 38px; border-top: 1px solid #c8c8c8; border-bottom: 1px solid #d0d0d0; background: #e5e5e5; display: flex; font-size: 15.500px; letter-spacing: -.28px; color: #666; }
.stab { display: flex; align-items: center; border-right: 1px solid #c4c4c4; }
.stab svg { margin-top: -2px; }
.source { width: 163px; padding-left: 10px; gap: 6px; }
.s1 { width: 72px; padding-left: 7px; }
.active { width: 209px; padding-left: 8px; gap: 4px; background: #fafafa; font-weight: 600; letter-spacing: -.21px; color: #555; }
.s2 { width: 71px; padding-left: 6px; }
.job { width: 169px; padding-left: 8px; gap: 7px; letter-spacing: -.14px; }
.add { width: 32px; justify-content: center; }
.statusbar { height: 26px; background: #ebebeb; border-bottom: 1px solid #bbb; display: flex; justify-content: flex-end; }
.statusbar i, .statusbar .views { border-left: 1px solid #c8c8c8; }
.w157 { width: 157px; }
.w32 { width: 32px; }
.w57 { width: 57px; }
.nav-arrows { border-left: 1px solid #c8c8c8; }

/* Taskbar */
.taskbar { height: 58px; background: #ededed; display: flex; align-items: center; color: #222; }
.weather { width: 475px; display: flex; align-items: center; gap: 4px; padding-left: 25px; margin-top: -1px; }
.weather span, .weather small { display: block; font-size: 14.600px; letter-spacing: -.08px; }
.weather small { color: #666; }
.badge { fill: #fff; font: 600 13px "Open Sans", sans-serif; }
.search { width: 274px; height: 39px; margin-left: 17px; border: 1px solid #d6d6d6; border-radius: 20px; background: #fafafa; display: flex; align-items: center; padding: 0 3px 0 14px; font-size: 16px; color: #555; }
.search span { margin: 1px 0 0 11px; }
.tree { margin-left: auto; }
.apps { display: flex; margin-left: 3px; }
.app { position: relative; width: 55px; height: 58px; display: flex; align-items: center; justify-content: center; }
.run::after, .current::after { content: ""; position: absolute; bottom: 5px; left: 24px; width: 8px; height: 4px; border-radius: 2px; background: #888; }
.current::after { left: 18px; width: 20px; background: #26808f; }
.current::before { content: ""; position: absolute; left: 3px; top: 5px; width: 48px; height: 48px; border: 1px solid #e2e2e2; border-radius: 5px; background: #f7f7f7; }
.app svg { position: relative; }
.dell { font: 700 10px "Open Sans", sans-serif; fill: #111; }
.wd { font: 700 12px "Open Sans", sans-serif; fill: #fff; }
.tray { margin-left: auto; }
.clock { width: 117px; padding-right: 24px; margin-top: -2px; text-align: right; font-size: 14.600px; letter-spacing: .1px; }
.clock span { display: block; }
.clock .time { letter-spacing: -.3px; }
```
